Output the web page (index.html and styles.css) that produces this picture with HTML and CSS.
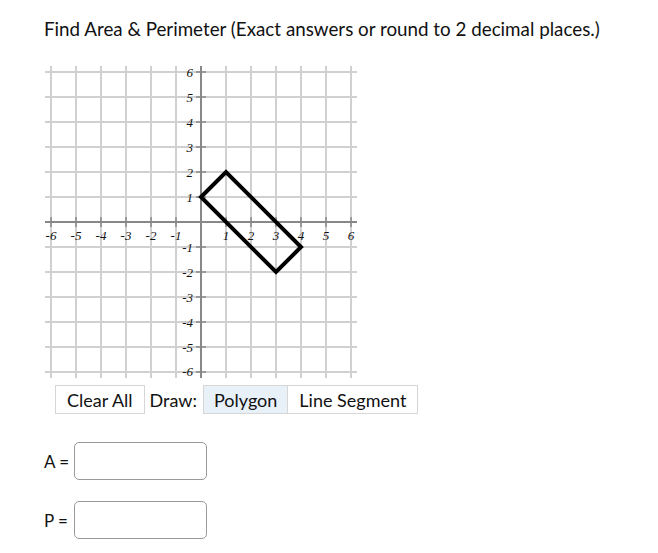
FILE: index.html
```html
<!DOCTYPE html>
<html lang="en">
<head>
    <meta charset="UTF-8">
    <meta name="viewport" content="width=device-width, initial-scale=1.0">
    <title>Find Area &amp; Perimeter</title>
    <link rel="stylesheet" href="styles.css">
</head>
<body>
    <div class="question">
        <h1 class="prompt">Find Area &amp; Perimeter (Exact answers or round to 2 decimal places.)</h1>

        <div class="board">
            <svg class="graph" width="312" height="312" viewBox="0 0 312 312">
                <!-- grid -->
                <path class="grid" d="M6 0V312M31 0V312M56 0V312M81 0V312M106 0V312M131 0V312M181 0V312M206 0V312M231 0V312M256 0V312M281 0V312M306 0V312
                    M0 6H312M0 31H312M0 56H312M0 81H312M0 106H312M0 131H312M0 181H312M0 206H312M0 231H312M0 256H312M0 281H312M0 306H312"/>
                <!-- axes -->
                <path class="axis" d="M156 0V312M0 156H312"/>
                <!-- ticks -->
                <path class="tick" d="M6 151V161M31 151V161M56 151V161M81 151V161M106 151V161M131 151V161M181 151V161M206 151V161M231 151V161M256 151V161M281 151V161M306 151V161
                    M151 6H161M151 31H161M151 56H161M151 81H161M151 106H161M151 131H161M151 181H161M151 206H161M151 231H161M151 256H161M151 281H161M151 306H161"/>
                <!-- x labels -->
                <g class="xlabels">
                    <text x="6" y="174">-6</text>
                    <text x="31" y="174">-5</text>
                    <text x="56" y="174">-4</text>
                    <text x="81" y="174">-3</text>
                    <text x="106" y="174">-2</text>
                    <text x="131" y="174">-1</text>
                    <text x="181" y="174">1</text>
                    <text x="206" y="174">2</text>
                    <text x="231" y="174">3</text>
                    <text x="256" y="174">4</text>
                    <text x="281" y="174">5</text>
                    <text x="306" y="174">6</text>
                </g>
                <!-- y labels -->
                <g class="ylabels">
                    <text x="148" y="11">6</text>
                    <text x="148" y="36">5</text>
                    <text x="148" y="61">4</text>
                    <text x="148" y="86">3</text>
                    <text x="148" y="111">2</text>
                    <text x="148" y="136">1</text>
                    <text x="148" y="186">-1</text>
                    <text x="148" y="211">-2</text>
                    <text x="148" y="236">-3</text>
                    <text x="148" y="261">-4</text>
                    <text x="148" y="286">-5</text>
                    <text x="148" y="310">-6</text>
                </g>
                <!-- drawn shape -->
                <polygon class="shape" points="156,131 181,106 256,181 231,206"/>
            </svg>
        </div>

        <div class="toolbar">
            <button class="tool-btn">Clear All</button>
            <span class="draw-label">Draw:</span>
            <div class="tool-group">
                <button class="tool-btn active">Polygon</button>
                <button class="tool-btn">Line Segment</button>
            </div>
        </div>

        <div class="answer-row">
            <label for="area">A =</label>
            <input type="text" id="area">
        </div>
        <div class="answer-row">
            <label for="perimeter">P =</label>
            <input type="text" id="perimeter">
        </div>
    </div>
</body>
</html>
```

FILE: styles.css
```css
body {
    font-family: "Lato", "Liberation Sans", sans-serif;
    background-color: white;
    color: #111;
    margin: 0;
    padding: 0;
}
.question {
    padding: 18px 0 0 44px;
}
.prompt {
    font-size: 18.8px;
    font-weight: normal;
    margin: 0 0 26px 0;
    line-height: 22px;
}
.board {
    margin-left: 1px;
    height: 312px;
}
.graph {
    display: block;
    overflow: visible;
}
.grid {
    stroke: #d0d0d0;
    stroke-width: 2;
    fill: none;
}
.axis {
    stroke: #888;
    stroke-width: 2;
    fill: none;
}
.tick {
    stroke: #888;
    stroke-width: 1.5;
    fill: none;
}
.xlabels text,
.ylabels text {
    font-family: "Liberation Serif", serif;
    font-style: italic;
    font-size: 13px;
    fill: #111;
}
.xlabels text {
    text-anchor: middle;
}
.ylabels text {
    text-anchor: end;
}
.shape {
    fill: none;
    stroke: black;
    stroke-width: 4;
}
.toolbar {
    display: flex;
    align-items: center;
    margin: 7px 0 0 11px;
}
.tool-group {
    display: flex;
}
.tool-btn {
    font-family: inherit;
    font-size: 18px;
    color: #111;
    background-color: white;
    border: 1px solid #d6d6d6;
    height: 29px;
    padding: 0 11px;
    margin: 0;
    cursor: pointer;
}
.tool-group .tool-btn + .tool-btn {
    border-left: none;
}
.tool-btn.active {
    background-color: #e8f0f8;
    padding: 0 10px;
}
.draw-label {
    font-size: 18px;
    margin: 0 6px 0 5px;
}
.answer-row {
    display: flex;
    align-items: center;
    margin-top: 28px;
}
.answer-row + .answer-row {
    margin-top: 21px;
}
.answer-row label {
    font-size: 17px;
    width: 30px;
}
.answer-row input {
    width: 133px;
    height: 38px;
    box-sizing: border-box;
    border: 1px solid #999;
    border-radius: 5px;
    font-size: 16px;
    padding: 0 6px;
}
```
